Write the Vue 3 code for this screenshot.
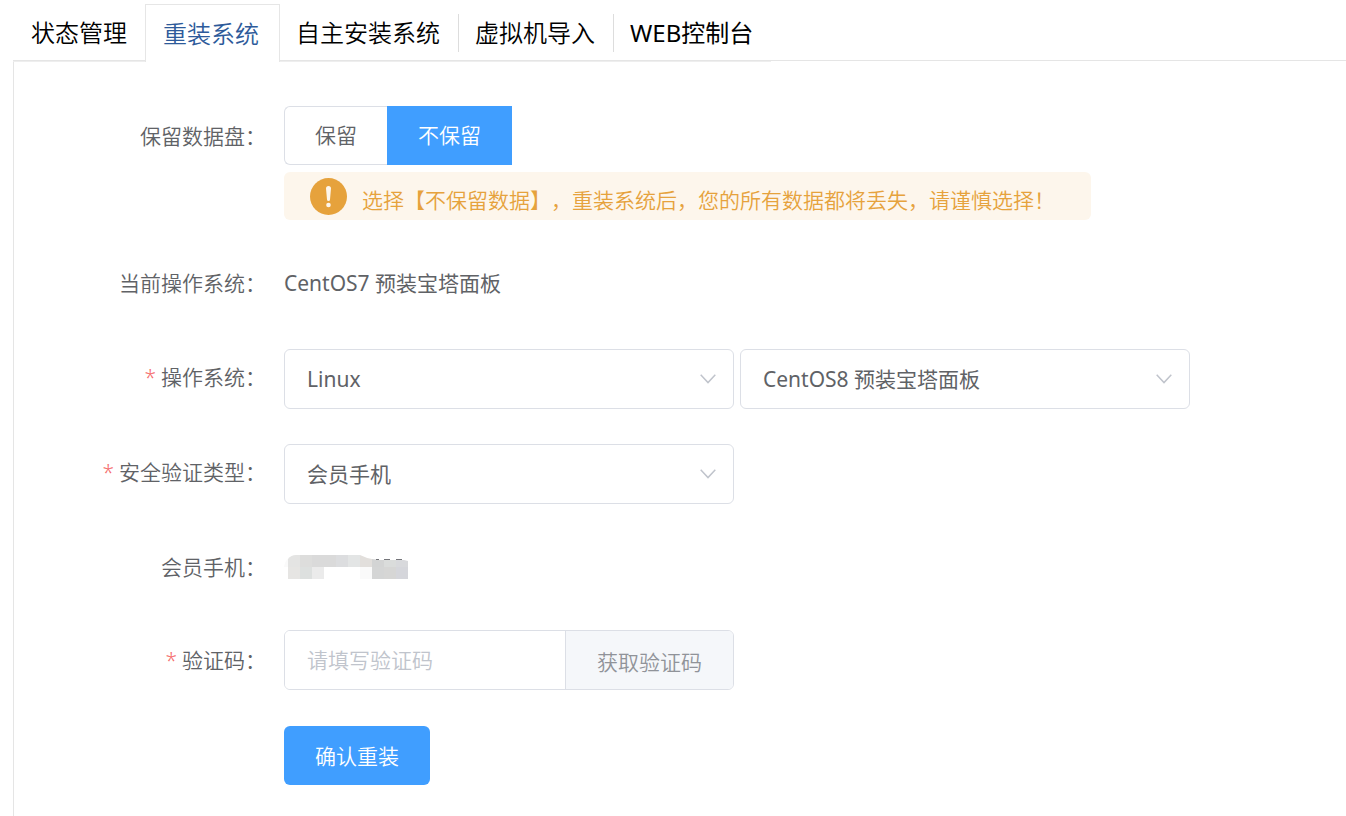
<script setup>
import { ref } from 'vue'

const tabs = ['状态管理', '重装系统', '自主安装系统', '虚拟机导入', 'WEB控制台']
const activeTab = ref('重装系统')
const keepData = ref('no')
const osFamily = ref('Linux')
const osImage = ref('CentOS8 预装宝塔面板')
const verifyType = ref('会员手机')
const code = ref('')

const mosaic = [
  { x: 12, y: 12, c: '#e6e5e3' },
  { x: 24, y: 12, c: '#dde0df' },
  { x: 36, y: 12, c: '#ebebeb' },
  { x: 84, y: 12, c: '#fafafa' },
  { x: 96, y: 12, c: '#d4d5d5' },
  { x: 108, y: 12, c: '#d6d6d5' },
  { x: 120, y: 12, c: '#d5d6db' },
  { x: 24, y: 0, c: '#dddddc' },
  { x: 36, y: 0, c: '#dadada' },
  { x: 48, y: 0, c: '#dadada' },
  { x: 60, y: 0, c: '#dcdddf' },
  { x: 72, y: 0, c: '#e3e5e5' }
]
</script>

<template>
  <div class="page">
    <nav class="tabs">
      <button
        v-for="tab in tabs"
        :key="tab"
        type="button"
        class="tab"
        :class="{ active: tab === activeTab }"
        @click="activeTab = tab"
      >
        <span>{{ tab }}</span>
      </button>
    </nav>

    <form class="panel" @submit.prevent>
      <div class="row tall" role="radiogroup" aria-labelledby="keep-label">
        <span id="keep-label" class="label">保留数据盘：</span>
        <div class="stack">
          <div class="radios">
            <label class="radio">
              <input v-model="keepData" type="radio" name="keep" value="yes" />
              <span>保留</span>
            </label>
            <label class="radio">
              <input v-model="keepData" type="radio" name="keep" value="no" />
              <span>不保留</span>
            </label>
          </div>
          <p class="alert">
            <svg class="alert-icon" viewBox="0 0 37 37" aria-hidden="true">
              <circle cx="18.5" cy="18.5" r="18.5" fill="#e6a23c" />
              <path d="M16 10.500a2.500 2.500 0 0 1 5 0L20 21.500a1.500 1.500 0 0 1-3 0Z" fill="#fdf6ec" />
              <circle cx="18.500" cy="27" r="2.300" fill="#fdf6ec" />
            </svg>
            <span>选择【不保留数据】，重装系统后，您的所有数据都将丢失，请谨慎选择！</span>
          </p>
        </div>
      </div>

      <div class="row current">
        <span class="label">当前操作系统：</span>
        <span class="value">CentOS7 预装宝塔面板</span>
      </div>

      <div class="row">
        <label class="label required" for="os-family">操作系统：</label>
        <div class="fields">
          <div class="select">
            <select id="os-family" v-model="osFamily">
              <option>Linux</option>
            </select>
            <svg viewBox="0 0 16 10" aria-hidden="true"><path d="M.7.8 8 8.600 15.300.8" /></svg>
          </div>
          <div class="select">
            <select v-model="osImage" aria-label="操作系统">
              <option>CentOS8 预装宝塔面板</option>
            </select>
            <svg viewBox="0 0 16 10" aria-hidden="true"><path d="M.7.8 8 8.600 15.300.8" /></svg>
          </div>
        </div>
      </div>

      <div class="row">
        <label class="label required" for="verify-type">安全验证类型：</label>
        <div class="fields">
          <div class="select">
            <select id="verify-type" v-model="verifyType">
              <option>会员手机</option>
            </select>
            <svg viewBox="0 0 16 10" aria-hidden="true"><path d="M.7.8 8 8.600 15.300.8" /></svg>
          </div>
        </div>
      </div>

      <div class="row">
        <span class="label">会员手机：</span>
        <span class="value masked">
          <svg class="mosaic" viewBox="8 0 124 24" aria-hidden="true">
            <path d="M8 12Q9 5 14 2L16 12Z" fill="#fafafa" />
            <path d="M12 12V4Q15 0 20 0H24V12Z" fill="#e4e4e3" />
            <path d="M84 0Q90 3 96 4V12H84Z" fill="#e2dfdc" />
            <path d="M96 4 104 5H108V12H96Z" fill="#d3d4d4" />
            <path d="M108 5H120V12H108Z" fill="#dadcdb" />
            <path d="M120 5H128L132 6V12H120Z" fill="#d8d9dc" />
            <path d="M100 4H103V5H100ZM108 4H114V5H108ZM120 4H126V5H120Z" fill="#74757a" />
            <rect v-for="(b, i) in mosaic" :key="i" :x="b.x" :y="b.y" width="12" height="12" :fill="b.c" />
          </svg>
        </span>
      </div>

      <div class="row tall">
        <label class="label required" for="code">验证码：</label>
        <div class="fields">
          <div class="group">
            <input id="code" v-model="code" type="text" placeholder="请填写验证码" />
            <button type="button">获取验证码</button>
          </div>
        </div>
      </div>

      <div class="row submit-row">
        <button type="submit" class="submit">确认重装</button>
      </div>
    </form>
  </div>
</template>

<style>
body {
  margin: 0;
  background: #fff;
}
</style>

<style scoped>
.page {
  box-sizing: border-box;
  min-height: 100vh;
  padding-left: 13px;
  display: flex;
  flex-direction: column;
  font-family: "Noto Sans", "Noto Sans CJK SC", sans-serif;
  font-size: 21px;
  font-weight: 350;
  color: #606266;
  text-spacing-trim: space-all;
}

.page * {
  box-sizing: border-box;
}

button,
input,
select {
  font: inherit;
  margin: 0;
  text-spacing-trim: inherit;
}

.tabs {
  position: relative;
  z-index: 1;
  display: flex;
  width: fit-content;
  padding-top: 4px;
  margin-bottom: -2px;
  border-bottom: 1px solid #eee;
  font-size: 24px;
}

.tab {
  display: flex;
  align-items: center;
  height: 57px;
  padding: 0;
  border: 0;
  background: none;
  color: #000;
  white-space: nowrap;
  cursor: pointer;
}

.tab span {
  line-height: 38px;
  padding: 0 18px 0 16px;
  border-right: 1px solid #ddd;
}

.tab:first-child span {
  padding: 0 18px;
  border: 0;
}

.tab:last-child span {
  border: 0;
  font-weight: 400;
}

.tab.active {
  height: 58px;
  margin-bottom: -1px;
  border: 1px solid #e6e6e6;
  border-bottom: 0;
  background: #fff;
  color: #2d5a9a;
}

.tab.active span {
  padding: 0 20px 0 17px;
  border: 0;
}

.panel {
  flex: 1;
  display: flex;
  flex-direction: column;
  gap: 35px;
  margin: 0;
  padding: 45px 20px 31px 0;
  border: 1px solid #e5e5e5;
  border-right: 0;
  border-bottom: 0;
}

.row {
  display: flex;
  align-items: flex-start;
}

.label {
  flex: none;
  width: 270px;
  padding-right: 18px;
  line-height: 56px;
  text-align: right;
  white-space: nowrap;
}

.tall .label {
  line-height: 60px;
}

.current {
  min-height: 59px;
}

.required::before {
  content: "*";
  margin-right: 5px;
  color: #f56c6c;
}

.value {
  line-height: 56px;
  font-weight: 400;
}

.stack {
  display: flex;
  flex-direction: column;
  align-items: flex-start;
  gap: 7px;
}

.radios {
  display: flex;
}

.radio {
  position: relative;
  cursor: pointer;
}

.radio input {
  position: absolute;
  opacity: 0;
}

.radio span {
  display: block;
  padding: 0 30px;
  border: 1px solid #dcdfe6;
  border-right: 0;
  line-height: 57px;
}

.radio:first-child span {
  border-radius: 6px 0 0 6px;
}

.radio input:checked + span {
  background: #409eff;
  border-color: #409eff;
  border-right: 1px solid #409eff;
  color: #fff;
}

.alert {
  display: flex;
  align-items: center;
  gap: 15px;
  min-height: 48px;
  margin: 0;
  padding: 0 36px 0 26px;
  border-radius: 6px;
  background: #fdf6ec;
  color: #e6a23c;
}

.alert span {
  padding-top: 8px;
  line-height: 30px;
}

.alert-icon {
  flex: none;
  width: 37px;
  height: 37px;
}

.fields {
  flex: 1;
  display: flex;
  gap: 6px;
  min-width: 0;
}

.select,
.group {
  position: relative;
  flex: 0 1 450px;
  min-width: 0;
  height: 60px;
}

.select select {
  appearance: none;
  width: 100%;
  height: 100%;
  padding: 0 60px 0 22px;
  border: 1px solid #dcdfe6;
  border-radius: 6px;
  background: #fff;
  color: #606266;
  font-weight: 400;
}

.select svg {
  position: absolute;
  right: 18px;
  top: 25px;
  width: 16px;
  height: 10px;
  fill: none;
  stroke: #c0c4cc;
  stroke-width: 1.5;
  pointer-events: none;
}

.masked {
  display: flex;
  align-items: center;
  height: 56px;
}

.mosaic {
  width: 124px;
  height: 24px;
}

.group {
  display: flex;
  border: 1px solid #dcdfe6;
  border-radius: 6px;
  overflow: hidden;
}

.group input {
  flex: 1;
  min-width: 0;
  padding: 0 22px;
  border: 0;
  outline: 0;
  color: #606266;
}

.group input::placeholder {
  color: #c0c4cc;
  opacity: 1;
}

.group button {
  padding: 2px 31px 0;
  border: 0;
  border-left: 1px solid #dcdfe6;
  background: #f5f7fa;
  color: #909399;
  cursor: pointer;
}

.submit-row {
  margin-top: 1px;
  padding-left: 270px;
}

.submit {
  height: 59px;
  padding: 0 31px 2px;
  border: 0;
  border-radius: 6px;
  background: #409eff;
  color: #fff;
  cursor: pointer;
}
</style>
